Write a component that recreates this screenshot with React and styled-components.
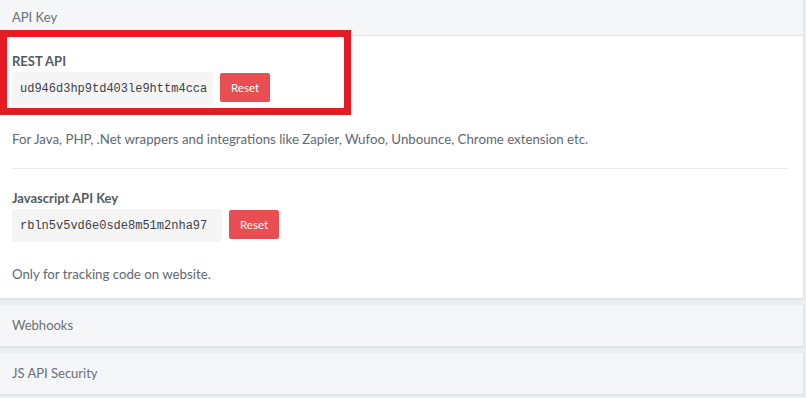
import React from 'react';
import styled, { createGlobalStyle } from 'styled-components';

const GlobalStyle = createGlobalStyle`
  html, body {
    margin: 0;
    padding: 0;
    background: #eceff0;
    font-family: Lato, "Open Sans", sans-serif;
    color: #555b60;
  }
`;

const keys = [
  {
    id: 'rest',
    label: 'REST API',
    value: 'ud946d3hp9td403le9httm4cca',
    valueWidth: 201,
    note: 'For Java, PHP, .Net wrappers and integrations like Zapier, Wufoo, Unbounce, Chrome extension etc.',
    highlighted: true,
  },
  {
    id: 'js',
    label: 'Javascript API Key',
    value: 'rbln5v5vd6e0sde8m51m2nha97',
    valueWidth: 210,
    note: 'Only for tracking code on website.',
  },
];

const App = () => (
  <Page>
    <GlobalStyle />
    <Panel>
      <PanelHeader>API Key</PanelHeader>
      <PanelBody>
        {keys.map((k, i) => (
          <KeySection key={k.id} $first={i === 0}>
            <KeyBlock>
              <KeyLabel>{k.label}</KeyLabel>
              <KeyRow>
                <KeyValue $width={k.valueWidth}>{k.value}</KeyValue>
                <ResetButton>Reset</ResetButton>
              </KeyRow>
              {k.highlighted && <Highlight />}
            </KeyBlock>
            <Note $first={i === 0}>{k.note}</Note>
          </KeySection>
        ))}
      </PanelBody>
    </Panel>
    <Panel>
      <PanelHeader $closed>Webhooks</PanelHeader>
    </Panel>
    <Panel>
      <PanelHeader $closed>JS API Security</PanelHeader>
    </Panel>
  </Page>
);

export default App;

const Page = styled.div`
  width: 804px;
  display: flex;
  flex-direction: column;
  gap: 6px;
  height: 398px;
`;

const Panel = styled.div`
  background: #fff;
  border-right: 1px solid #dfe3e5;
  border-bottom: 1px solid #dfe3e5;
  box-shadow: 0 1px 1px rgba(0, 0, 0, 0.04);
`;

const PanelHeader = styled.div`
  height: ${(p) => (p.$closed ? '41px' : '36px')};
  box-sizing: border-box;
  display: flex;
  align-items: center;
  padding: 0 12px;
  padding-bottom: ${(p) => (p.$closed ? '1px' : '2px')};
  background: #f5f6f7;
  border-bottom: ${(p) => (p.$closed ? 'none' : '1px solid #e4e7e9')};
  font-size: 13px;
  color: #6a6f74;
`;

const PanelBody = styled.div`
  padding: 0 12px 11px;
`;

const KeySection = styled.div`
  padding-top: ${(p) => (p.$first ? '17px' : '21px')};
  padding-bottom: ${(p) => (p.$first ? '21px' : '5px')};
  border-bottom: ${(p) => (p.$first ? '1px solid #e8ebed' : 'none')};
  margin-right: 3px;
`;

const KeyBlock = styled.div`
  position: relative;
  display: flex;
  flex-direction: column;
  gap: 3px;
`;

const KeyLabel = styled.div`
  font-size: 13px;
  font-weight: 700;
  color: #555b60;
  line-height: 16px;
`;

const KeyRow = styled.div`
  display: flex;
  align-items: flex-start;
  gap: 7px;
`;

const KeyValue = styled.div`
  width: ${(p) => p.$width}px;
  box-sizing: border-box;
  background: #f5f5f6;
  border-radius: 3px;
  padding: 0 0 0 8px;
  height: 33px;
  display: flex;
  align-items: center;
  font-family: "Liberation Mono", "DejaVu Sans Mono", monospace;
  font-size: 12px;
  color: #3c4146;
`;

const ResetButton = styled.button`
  margin-top: 1px;
  height: 29px;
  padding: 0 11px;
  border: none;
  border-radius: 2px;
  background: #e84e52;
  color: #fff;
  font-family: Lato, "Open Sans", sans-serif;
  font-size: 11.5px;
  cursor: pointer;
`;

const Note = styled.p`
  margin: ${(p) => (p.$first ? '26px' : '24px')} 0 0;
  font-size: 13.25px;
  color: #626870;
  line-height: 16px;
`;

const Highlight = styled.div`
  position: absolute;
  left: -12px;
  top: -23px;
  width: 351px;
  height: 85px;
  box-sizing: border-box;
  border: 7px solid #e51b24;
  pointer-events: none;
`;
